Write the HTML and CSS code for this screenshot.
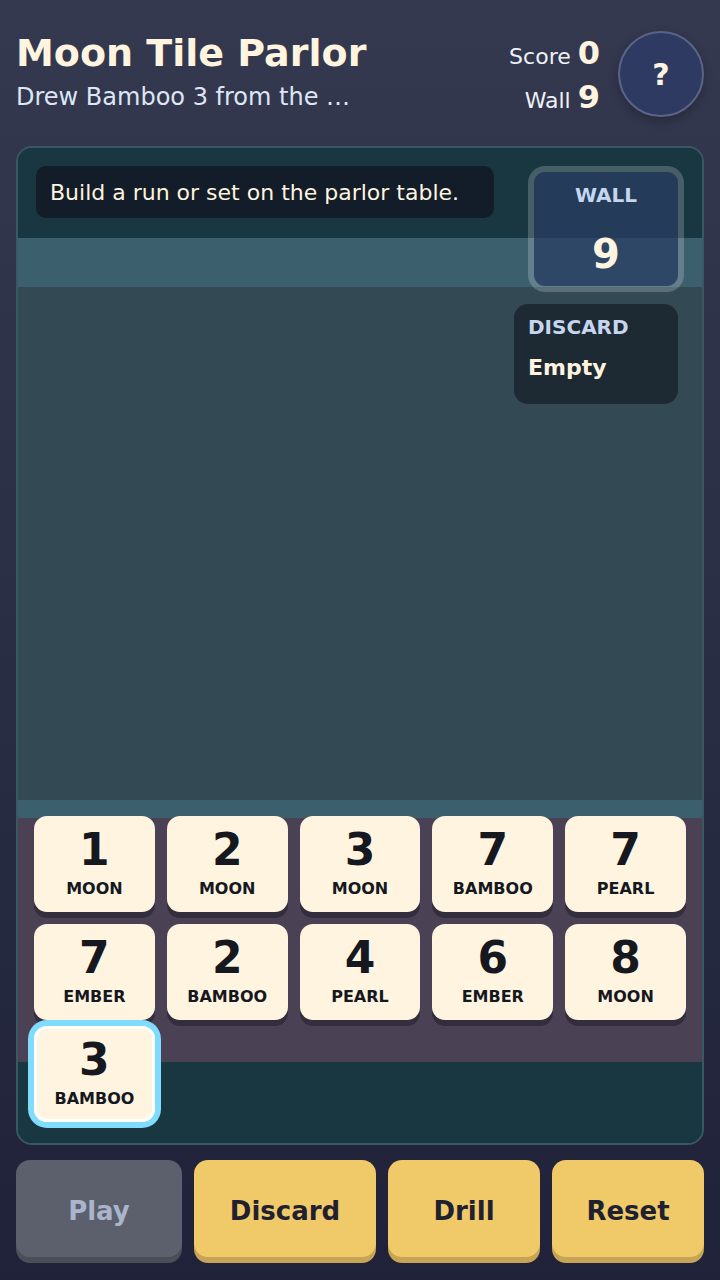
FILE: index.html
```html
<!DOCTYPE html>
<html lang="en">
<head>
<meta charset="utf-8">
<title>Moon Tile Parlor</title>
<link rel="stylesheet" href="styles.css">
</head>
<body>
<div class="app">
  <header class="top">
    <div class="titles">
      <h1 class="title">Moon Tile Parlor</h1>
      <p class="status">Drew Bamboo 3 from the …</p>
    </div>
    <div class="stats">
      <div class="stat"><span class="stat-label">Score</span><b class="stat-value">0</b></div>
      <div class="stat"><span class="stat-label">Wall</span><b class="stat-value">9</b></div>
    </div>
    <button class="help" type="button">?</button>
  </header>

  <section class="board">
    <div class="zone zone-top"></div>
    <div class="zone rail rail-top"></div>
    <div class="zone felt"></div>
    <div class="zone rail rail-bottom"></div>
    <div class="zone hand">
      <div class="tiles">
        <div class="tile"><span class="num">1</span><span class="suit">MOON</span></div>
        <div class="tile"><span class="num">2</span><span class="suit">MOON</span></div>
        <div class="tile"><span class="num">3</span><span class="suit">MOON</span></div>
        <div class="tile"><span class="num">7</span><span class="suit">BAMBOO</span></div>
        <div class="tile"><span class="num">7</span><span class="suit">PEARL</span></div>
        <div class="tile"><span class="num">7</span><span class="suit">EMBER</span></div>
        <div class="tile"><span class="num">2</span><span class="suit">BAMBOO</span></div>
        <div class="tile"><span class="num">4</span><span class="suit">PEARL</span></div>
        <div class="tile"><span class="num">6</span><span class="suit">EMBER</span></div>
        <div class="tile"><span class="num">8</span><span class="suit">MOON</span></div>
        <div class="tile selected"><span class="num">3</span><span class="suit">BAMBOO</span></div>
      </div>
    </div>
    <div class="zone zone-foot"></div>

    <div class="message">Build a run or set on the parlor table.</div>
    <div class="wall-box">
      <span class="panel-label">WALL</span>
      <span class="wall-count">9</span>
    </div>
    <div class="discard-box">
      <span class="panel-label">DISCARD</span>
      <span class="discard-value">Empty</span>
    </div>
  </section>

  <nav class="actions">
    <button class="btn btn-disabled" type="button">Play</button>
    <button class="btn" type="button">Discard</button>
    <button class="btn" type="button">Drill</button>
    <button class="btn" type="button">Reset</button>
  </nav>
</div>
</body>
</html>
```
FILE: styles.css
```css
* { box-sizing: border-box; }

html, body {
  margin: 0;
  padding: 0;
}

body {
  width: 720px;
  height: 1280px;
  overflow: hidden;
  background: linear-gradient(180deg, #343950 0%, #2a2e44 50%, #1f2238 100%);
  font-family: "DejaVu Sans", "Noto Sans", sans-serif;
  color: #fff4df;
}

.app {
  padding: 0 16px;
}

/* Header */
.top {
  display: flex;
  align-items: flex-start;
  gap: 16px;
  padding-top: 31px;
  height: 117px;
}

.titles {
  flex: 1;
  min-width: 0;
  padding-top: 2px;
}

.title {
  margin: 0;
  font-size: 38px;
  line-height: 1.1;
  font-weight: 700;
  color: #fff4df;
  white-space: nowrap;
}

.status {
  margin: 8px 0 0;
  font-size: 24px;
  line-height: 1.2;
  color: #dde7f3;
  white-space: nowrap;
}

.stats {
  display: flex;
  flex-direction: column;
  align-items: flex-end;
  margin-right: 2px;
  padding-top: 2px;
}

.stat {
  display: flex;
  align-items: baseline;
  gap: 7px;
  line-height: 41px;
}

.stat-label {
  font-size: 22px;
  color: #eef2f8;
}

.stat-value {
  font-size: 32px;
  font-weight: 700;
  color: #fff4df;
}

.help {
  flex: none;
  width: 86px;
  height: 86px;
  border-radius: 50%;
  border: 2px solid #5b6487;
  background: #2e3a62;
  color: #fff4df;
  font-family: inherit;
  font-size: 30px;
  font-weight: 700;
  padding: 0;
  box-shadow: 0 4px 10px rgba(0, 0, 0, 0.25);
}

/* Board */
.board {
  position: relative;
  margin-top: 29px;
  height: 999px;
  border: 2px solid #3a5864;
  border-radius: 16px;
  overflow: hidden;
  display: flex;
  flex-direction: column;
  background: #183740;
}

.zone { flex: none; }

.zone-top { height: 90px; background: #183740; }
.rail { background: #3c5f6e; }
.rail-top { height: 49px; }
.felt { height: 513px; background: #334a55; }
.rail-bottom { height: 18px; }
.hand {
  height: 244px;
  background: #4a4155;
  padding: 0 16px;
}
.zone-foot { height: 81px; background: #183740; }

.tiles {
  margin-top: -2px;
  display: grid;
  grid-template-columns: repeat(5, 1fr);
  grid-auto-rows: 96px;
  gap: 12px;
}

.tile {
  background: #fff4df;
  border-radius: 13px;
  box-shadow: 0 6px 0 #342d3d;
  display: flex;
  flex-direction: column;
  align-items: center;
  padding-top: 12px;
  gap: 9px;
  color: #16181f;
}

.num {
  font-size: 44px;
  line-height: 1;
  font-weight: 700;
}

.suit {
  font-size: 16px;
  line-height: 1;
  font-weight: 700;
}

.tile.selected {
  transform: translateY(-6px);
  box-shadow: inset 0 0 0 3px #ffffff, 0 0 0 6px #80dcfd;
}

/* Overlays on the table */
.message {
  position: absolute;
  top: 18px;
  left: 18px;
  width: 458px;
  height: 52px;
  display: flex;
  align-items: center;
  padding: 0 14px;
  border-radius: 10px;
  background: #121d29;
  font-size: 22px;
  color: #fff4df;
}

.wall-box {
  position: absolute;
  top: 18px;
  right: 18px;
  width: 156px;
  height: 126px;
  border: 6px solid rgba(255, 255, 255, 0.2);
  border-radius: 17px;
  background: rgba(42, 62, 100, 0.72);
  background-clip: padding-box;
  display: flex;
  flex-direction: column;
  align-items: center;
  padding-top: 11px;
  gap: 24px;
}

.panel-label {
  font-size: 20px;
  line-height: normal;
  font-weight: 700;
  color: #c6d6ee;
}

.wall-count {
  font-size: 40px;
  line-height: normal;
  font-weight: 700;
  color: #fff4df;
}

.discard-box {
  position: absolute;
  top: 156px;
  right: 24px;
  width: 164px;
  height: 100px;
  border-radius: 14px;
  background: #1d2a34;
  display: flex;
  flex-direction: column;
  padding: 11px 14px 0;
  gap: 16px;
}

.discard-value {
  font-size: 22px;
  line-height: normal;
  font-weight: 700;
  color: #fff4df;
}

/* Actions */
.actions {
  margin-top: 15px;
  display: grid;
  grid-template-columns: 166fr 182fr 152fr 152fr;
  gap: 12px;
}

.btn {
  height: 97px;
  border: none;
  border-radius: 14px;
  background: #f0ca69;
  box-shadow: 0 6px 0 #c7a355;
  color: #1f2130;
  font-family: inherit;
  font-size: 26px;
  font-weight: 700;
  padding: 5px 0 0;
}

.btn-disabled {
  background: #5b606c;
  box-shadow: 0 6px 0 #4a4e59;
  color: #aab5cb;
}
```
